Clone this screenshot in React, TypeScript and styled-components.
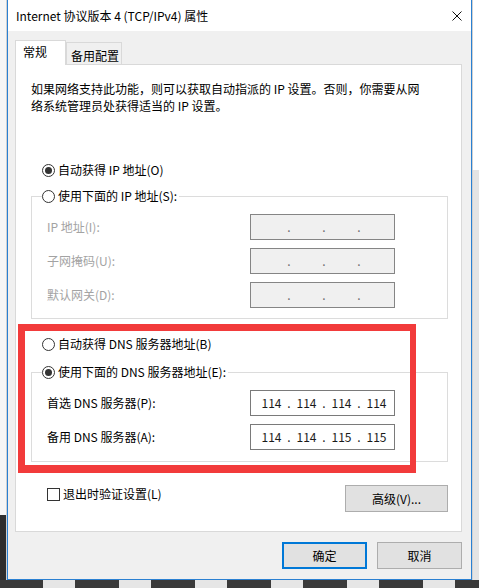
import React from 'react'
import styled, { createGlobalStyle } from 'styled-components'

const GlobalStyle = createGlobalStyle`
  html, body {
    margin: 0;
    padding: 0;
  }
  body {
    width: 479px;
    height: 588px;
    overflow: hidden;
    background: #f2f2f2;
    font-family: "Noto Sans CJK SC", "Microsoft YaHei", sans-serif;
    font-size: 12px;
    color: #000;
  }
  * {
    box-sizing: border-box;
  }
`

const Screen = styled.div`
  position: relative;
  width: 479px;
  height: 588px;
  display: flex;
  flex-direction: column;
`

const Desktop = styled.div`
  display: flex;
  height: 580px;
`

const SideStrip = styled.div<{ $right?: boolean }>`
  width: 7px;
  background: ${p => p.$right
    ? 'linear-gradient(#ffffff 0, #ffffff 170px, #e4e4e4 170px)'
    : 'linear-gradient(#f6f6f6 0, #f6f6f6 515px, #2e2e2e 515px)'};
  border-${p => (p.$right ? 'left' : 'right')}: 1px solid #d0d0d0;
`

const TaskStrip = styled.div`
  height: 8px;
  background: #3a3a3a;
  display: flex;
  gap: 44px;
  padding-left: 43px;
`

const TaskTab = styled.div`
  width: 32px;
  height: 8px;
  background: #e6e6e6;
`

const Window = styled.div`
  width: 465px;
  height: 580px;
  display: flex;
  flex-direction: column;
  border: 1px solid #2a80d2;
  border-top: none;
  background: #f0f0f0;
`

const TitleBar = styled.div`
  height: 31px;
  flex-shrink: 0;
  background: #fff;
  display: flex;
  align-items: center;
  justify-content: space-between;
  padding: 0 9px 0 8px;
  line-height: 18px;
`

const Body = styled.div`
  flex: 1;
  display: flex;
  flex-direction: column;
  padding: 9px 9px 0 7px;
`

const TabStrip = styled.div`
  display: flex;
  align-items: flex-end;
  height: 24px;
`

const Tab = styled.div<{ $active?: boolean; $w: number }>`
  position: relative;
  z-index: 1;
  width: ${p => p.$w}px;
  height: ${p => (p.$active ? 25 : 22)}px;
  margin-bottom: ${p => (p.$active ? -1 : 0)}px;
  padding: ${p => (p.$active ? '2px 0 0 7px' : '4px 0 0 4px')};
  line-height: 18px;
  background: ${p => (p.$active ? '#fff' : '#f0f0f0')};
  border: 1px solid #d9d9d9;
  border-bottom: ${p => (p.$active ? 'none' : '0')};
  white-space: nowrap;
`

const Panel = styled.div`
  height: 468px;
  background: #fff;
  border: 1px solid #d9d9d9;
  padding: 15px 13px 0 15px;
  display: flex;
  flex-direction: column;
`

const Intro = styled.p`
  margin: 0 0 47px;
  line-height: 17px;
`

const RadioRow = styled.label<{ $gap?: number; $indent?: number }>`
  display: flex;
  align-items: center;
  gap: 3px;
  height: 18px;
  line-height: 18px;
  margin-left: ${p => p.$indent ?? 11}px;
  margin-bottom: ${p => p.$gap ?? 0}px;
  white-space: nowrap;
`

const RadioDot = styled.span<{ $on?: boolean }>`
  width: 13px;
  height: 13px;
  border-radius: 50%;
  border: 1px solid #333;
  background: #fff;
  display: flex;
  align-items: center;
  justify-content: center;
  flex-shrink: 0;

  &::after {
    content: '';
    width: 7px;
    height: 7px;
    border-radius: 50%;
    background: ${p => (p.$on ? '#333' : 'transparent')};
  }
`

const Group = styled.fieldset<{ $pb: number; $mb: number }>`
  margin: 0 0 ${p => p.$mb}px;
  border: 1px solid #dcdcdc;
  padding: 9px 0 ${p => p.$pb}px 15px;
  min-width: 0;

  legend {
    margin-left: -5px;
    padding: 0 2px 0 0;
    background: #fff;
  }
`

const FieldGrid = styled.div`
  display: grid;
  grid-template-columns: 203px 145px;
  row-gap: 8px;
  align-items: center;
`

const FieldLabel = styled.span<{ $disabled?: boolean }>`
  color: ${p => (p.$disabled ? '#a3a3a3' : '#000')};
  line-height: 18px;
  white-space: nowrap;
`

const IpBox = styled.div<{ $disabled?: boolean }>`
  height: 26px;
  display: flex;
  align-items: center;
  padding-left: 7px;
  border: 1px solid ${p => (p.$disabled ? '#858585' : '#7a7a7a')};
  background: ${p => (p.$disabled ? '#f0f0f0' : '#fff')};
  color: #1a1a1a;
  line-height: 18px;
`

const Octet = styled.span`
  width: 27px;
  text-align: center;
`

const Dot = styled.span<{ $disabled?: boolean }>`
  width: 8px;
  text-align: center;
  color: ${p => (p.$disabled ? '#6d6d6d' : '#1a1a1a')};
`

const BottomRow = styled.div`
  display: flex;
  justify-content: space-between;
  align-items: flex-start;
`

const CheckRow = styled.label`
  display: flex;
  align-items: center;
  gap: 3px;
  height: 18px;
  margin-left: 16px;
  line-height: 18px;
`

const CheckBox = styled.span`
  width: 13px;
  height: 13px;
  border: 1px solid #333;
  background: #fff;
`

const Button = styled.div<{ $w: number; $primary?: boolean }>`
  width: ${p => p.$w}px;
  height: 27px;
  display: flex;
  align-items: center;
  justify-content: center;
  background: #e1e1e1;
  border: ${p => (p.$primary ? '2px solid #0078d7' : '1px solid #adadad')};
  line-height: 18px;
`

const Footer = styled.div`
  display: flex;
  justify-content: flex-end;
  gap: 10px;
  margin-top: 10px;
`

const Highlight = styled.div`
  position: absolute;
  left: 18px;
  top: 324px;
  width: 398px;
  height: 149px;
  border-style: solid;
  border-color: #f23b3b;
  border-width: 7px 6px 8px 7px;
  pointer-events: none;
`

const CloseIcon = () => (
  <svg width="10" height="10" viewBox="0 0 10 10">
    <path d="M0.5 0.5 L9.5 9.5 M9.5 0.5 L0.5 9.5" stroke="#111" strokeWidth="1" />
  </svg>
)

const IpField: React.FC<{ value?: string[]; disabled?: boolean }> = ({ value, disabled }) => {
  const parts = value ?? ['', '', '', '']
  return (
    <IpBox $disabled={disabled}>
      {parts.map((part, i) => (
        <React.Fragment key={i}>
          {i > 0 && <Dot $disabled={disabled}>.</Dot>}
          <Octet>{part}</Octet>
        </React.Fragment>
      ))}
    </IpBox>
  )
}

export default function App() {
  return (
    <Screen>
      <GlobalStyle />
      <Desktop>
        <SideStrip />
        <Window>
          <TitleBar>
            <span>Internet 协议版本 4 (TCP/IPv4) 属性</span>
            <CloseIcon />
          </TitleBar>
          <Body>
            <TabStrip>
              <Tab $active $w={51}>常规</Tab>
              <Tab $w={56}>备用配置</Tab>
            </TabStrip>
            <Panel>
              <Intro>
                如果网络支持此功能，则可以获取自动指派的 IP 设置。否则，你需要从网
                <br />
                络系统管理员处获得适当的 IP 设置。
              </Intro>

              <RadioRow $gap={8}>
                <RadioDot $on />
                自动获得 IP 地址(O)
              </RadioRow>
              <Group $pb={10} $mb={16}>
                <legend>
                  <RadioRow as="span" $indent={0}>
                    <RadioDot />
                    使用下面的 IP 地址(S):
                  </RadioRow>
                </legend>
                <FieldGrid>
                  <FieldLabel $disabled>IP 地址(I):</FieldLabel>
                  <IpField disabled />
                  <FieldLabel $disabled>子网掩码(U):</FieldLabel>
                  <IpField disabled />
                  <FieldLabel $disabled>默认网关(D):</FieldLabel>
                  <IpField disabled />
                </FieldGrid>
              </Group>

              <RadioRow $gap={10}>
                <RadioDot />
                自动获得 DNS 服务器地址(B)
              </RadioRow>
              <Group $pb={11} $mb={23}>
                <legend>
                  <RadioRow as="span" $indent={0}>
                    <RadioDot $on />
                    使用下面的 DNS 服务器地址(E):
                  </RadioRow>
                </legend>
                <FieldGrid>
                  <FieldLabel>首选 DNS 服务器(P):</FieldLabel>
                  <IpField value={['114', '114', '114', '114']} />
                  <FieldLabel>备用 DNS 服务器(A):</FieldLabel>
                  <IpField value={['114', '114', '115', '115']} />
                </FieldGrid>
              </Group>

              <BottomRow>
                <CheckRow>
                  <CheckBox />
                  退出时验证设置(L)
                </CheckRow>
                <Button $w={103}>高级(V)...</Button>
              </BottomRow>
            </Panel>
            <Footer>
              <Button $w={85} $primary>确定</Button>
              <Button $w={85}>取消</Button>
            </Footer>
          </Body>
        </Window>
        <SideStrip $right />
      </Desktop>
      <TaskStrip>
        {[0, 1, 2, 3, 4, 5].map(i => <TaskTab key={i} />)}
      </TaskStrip>
      <Highlight />
    </Screen>
  )
}
